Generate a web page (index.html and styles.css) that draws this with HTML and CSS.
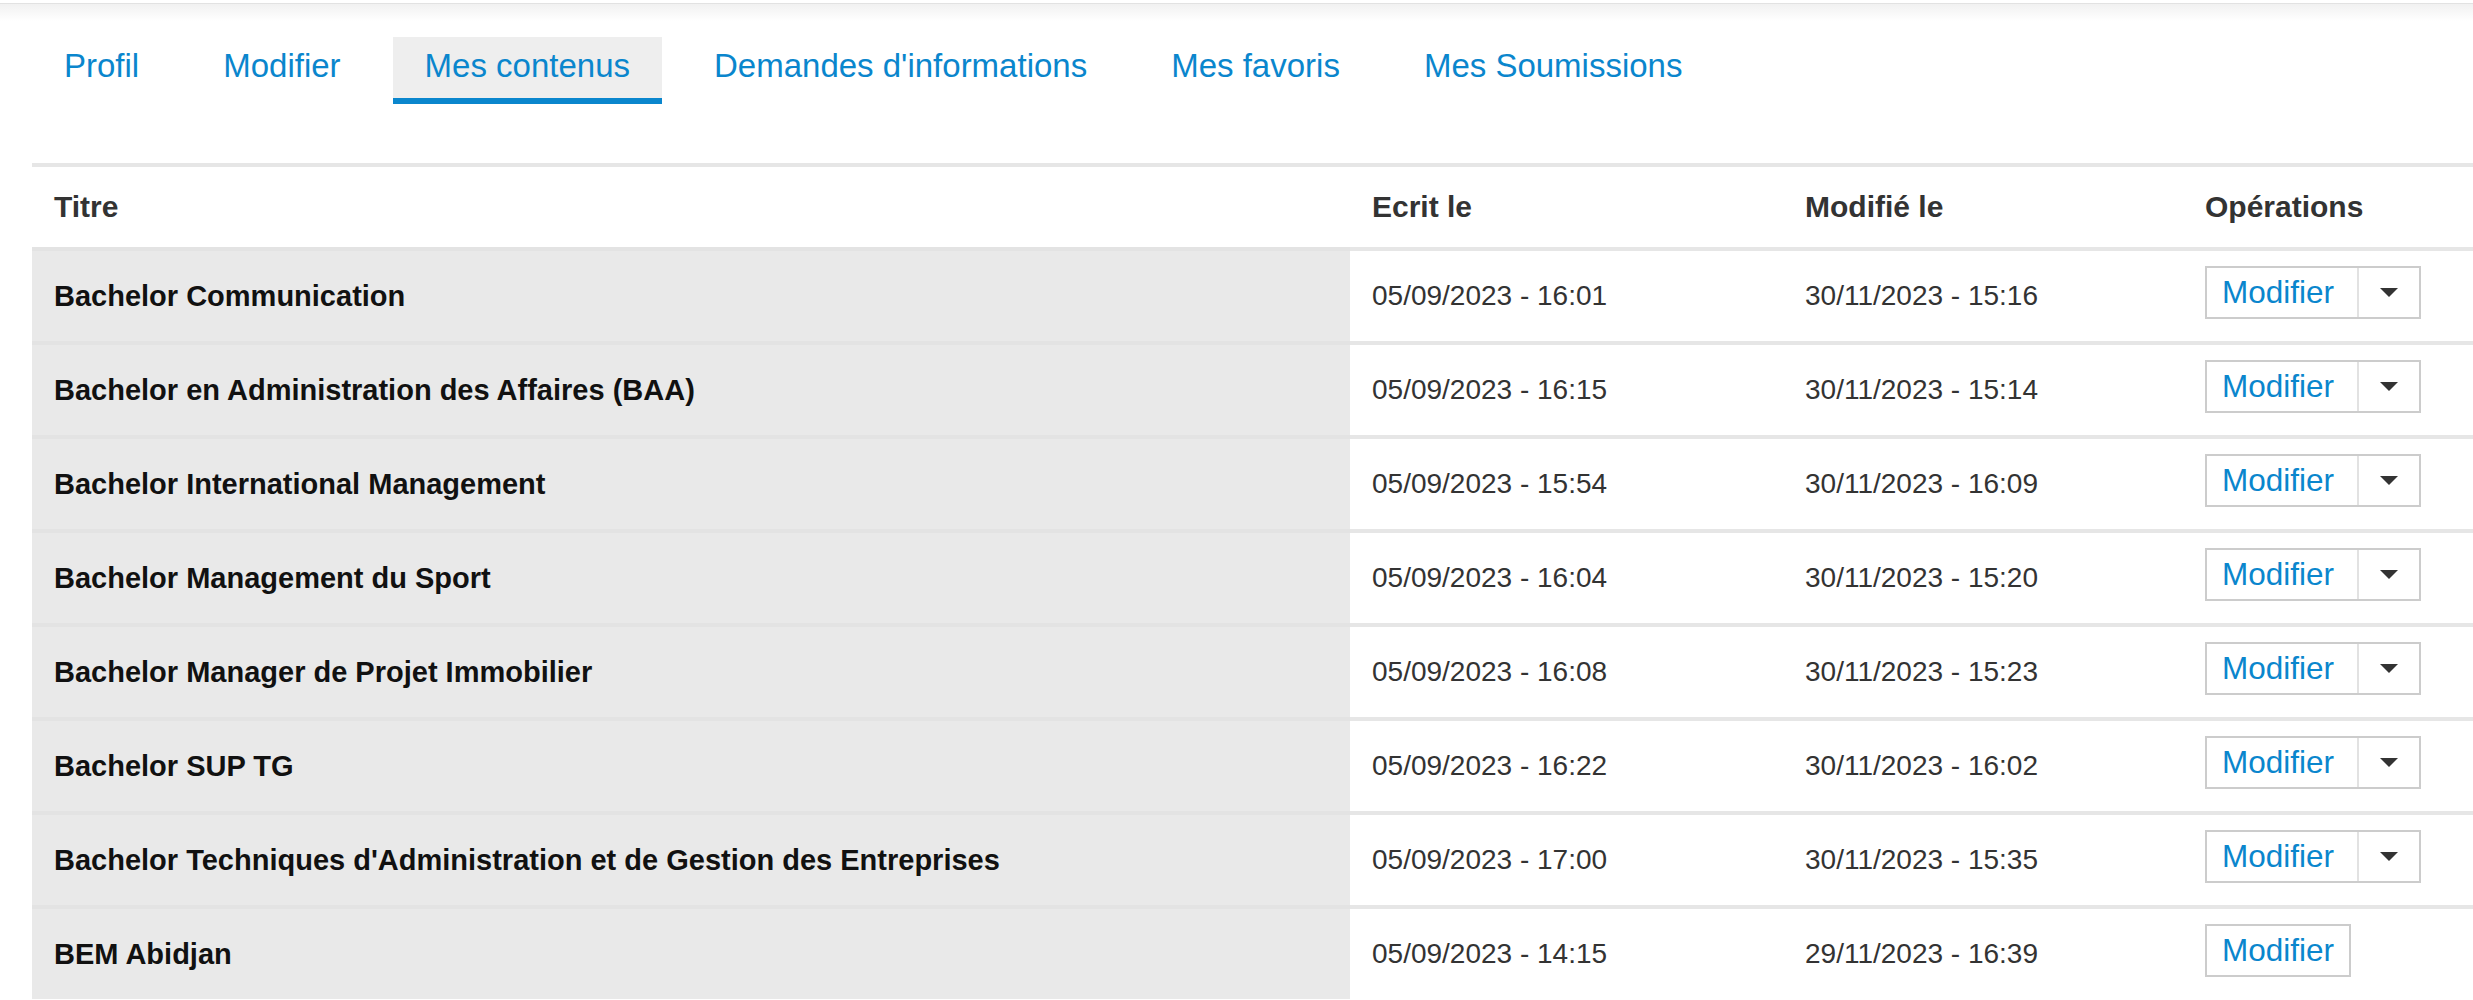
FILE: index.html
```html
<!DOCTYPE html>
<html>
  <head>
    <meta charset="utf-8">
    <title>Mes contenus</title>
    <link rel="stylesheet" href="styles.css">
  </head>
  <body>
    <div class="topbar"></div>

    <!-- Onglets du compte -->
    <ul class="tabs">
      <li class="tab"><a href="#">Profil</a></li>
      <li class="tab"><a href="#">Modifier</a></li>
      <li class="tab active"><a href="#">Mes contenus</a></li>
      <li class="tab"><a href="#">Demandes d'informations</a></li>
      <li class="tab"><a href="#">Mes favoris</a></li>
      <li class="tab"><a href="#">Mes Soumissions</a></li>
    </ul>

    <!-- Liste des contenus -->
    <table class="content-table">
      <colgroup>
        <col class="col-title">
        <col class="col-created">
        <col class="col-changed">
        <col>
      </colgroup>
      <thead>
        <tr>
          <th>Titre</th>
          <th>Ecrit le</th>
          <th>Modifié le</th>
          <th>Opérations</th>
        </tr>
      </thead>
      <tbody>
        <tr>
          <td class="title">Bachelor Communication</td>
          <td class="date">05/09/2023 - 16:01</td>
          <td class="date">30/11/2023 - 15:16</td>
          <td class="ops"><div class="btn-group"><a class="btn" href="#">Modifier</a><span class="toggle"><span class="caret"></span></span></div></td>
        </tr>
        <tr>
          <td class="title">Bachelor en Administration des Affaires (BAA)</td>
          <td class="date">05/09/2023 - 16:15</td>
          <td class="date">30/11/2023 - 15:14</td>
          <td class="ops"><div class="btn-group"><a class="btn" href="#">Modifier</a><span class="toggle"><span class="caret"></span></span></div></td>
        </tr>
        <tr>
          <td class="title">Bachelor International Management</td>
          <td class="date">05/09/2023 - 15:54</td>
          <td class="date">30/11/2023 - 16:09</td>
          <td class="ops"><div class="btn-group"><a class="btn" href="#">Modifier</a><span class="toggle"><span class="caret"></span></span></div></td>
        </tr>
        <tr>
          <td class="title">Bachelor Management du Sport</td>
          <td class="date">05/09/2023 - 16:04</td>
          <td class="date">30/11/2023 - 15:20</td>
          <td class="ops"><div class="btn-group"><a class="btn" href="#">Modifier</a><span class="toggle"><span class="caret"></span></span></div></td>
        </tr>
        <tr>
          <td class="title">Bachelor Manager de Projet Immobilier</td>
          <td class="date">05/09/2023 - 16:08</td>
          <td class="date">30/11/2023 - 15:23</td>
          <td class="ops"><div class="btn-group"><a class="btn" href="#">Modifier</a><span class="toggle"><span class="caret"></span></span></div></td>
        </tr>
        <tr>
          <td class="title">Bachelor SUP TG</td>
          <td class="date">05/09/2023 - 16:22</td>
          <td class="date">30/11/2023 - 16:02</td>
          <td class="ops"><div class="btn-group"><a class="btn" href="#">Modifier</a><span class="toggle"><span class="caret"></span></span></div></td>
        </tr>
        <tr>
          <td class="title">Bachelor Techniques d'Administration et de Gestion des Entreprises</td>
          <td class="date">05/09/2023 - 17:00</td>
          <td class="date">30/11/2023 - 15:35</td>
          <td class="ops"><div class="btn-group"><a class="btn" href="#">Modifier</a><span class="toggle"><span class="caret"></span></span></div></td>
        </tr>
        <tr>
          <td class="title">BEM Abidjan</td>
          <td class="date">05/09/2023 - 14:15</td>
          <td class="date">29/11/2023 - 16:39</td>
          <td class="ops"><div class="btn-group single"><a class="btn" href="#">Modifier</a></div></td>
        </tr>
      </tbody>
    </table>
  </body>
</html>
```

FILE: styles.css
```css
body {
  margin: 0;
  font-family: "Liberation Sans", Arial, sans-serif;
  color: #333;
  background: #fff;
}
a {
  text-decoration: none;
  color: #0a86cd;
}
.topbar {
  height: 17px;
  margin-top: 3px;
  border-top: 1px solid #e2e2e2;
  background: linear-gradient(#f1f1f1, #ffffff);
}

/* ---------- tabs ---------- */
.tabs {
  display: flex;
  gap: 20px;
  list-style: none;
  margin: 16px 0 0;
  padding: 0 0 0 32px;
}
.tab a {
  display: block;
  padding: 0 32px 4px;
  font-size: 33px;
  line-height: 57px;
  border-bottom: 6px solid transparent;
}
.tab.active a {
  background: #eeeeee;
  border-bottom-color: #0a86cd;
}

/* ---------- table ---------- */
.content-table {
  width: calc(100% - 32px);
  margin: 59px 0 0 32px;
  border-collapse: separate;
  border-spacing: 0;
  table-layout: fixed;
}
.col-title {
  width: 1318px;
}
.col-created {
  width: 433px;
}
.col-changed {
  width: 400px;
}
.content-table th,
.content-table td {
  padding: 0 22px;
  text-align: left;
  border-top: 4px solid #e6e6e6;
  white-space: nowrap;
}
.content-table th {
  font-size: 30px;
  line-height: 80px;
  font-weight: bold;
  color: #333;
}
.content-table td {
  line-height: 90px;
}
.content-table td.title {
  background: #e9e9e9;
  border-top-color: #e3e3e3;
  font-size: 29px;
  font-weight: bold;
  color: #111;
}
.content-table td.date {
  font-size: 28px;
  color: #333;
}
.content-table td.ops {
  padding-top: 15px;
  padding-bottom: 22px;
  line-height: normal;
  vertical-align: top;
}

/* ---------- split button ---------- */
.btn-group {
  display: inline-flex;
  height: 49px;
  border: 2px solid #cccccc;
  background: #fff;
}
.btn {
  padding: 0 23px 0 15px;
  font-size: 31.5px;
  line-height: 49px;
}
.btn-group.single .btn {
  padding-right: 15px;
}
.toggle {
  display: flex;
  align-items: center;
  justify-content: center;
  width: 60px;
  border-left: 2px solid #e2e2e2;
}
.caret {
  width: 0;
  height: 0;
  border-left: 9px solid transparent;
  border-right: 9px solid transparent;
  border-top: 9px solid #333;
}
```
